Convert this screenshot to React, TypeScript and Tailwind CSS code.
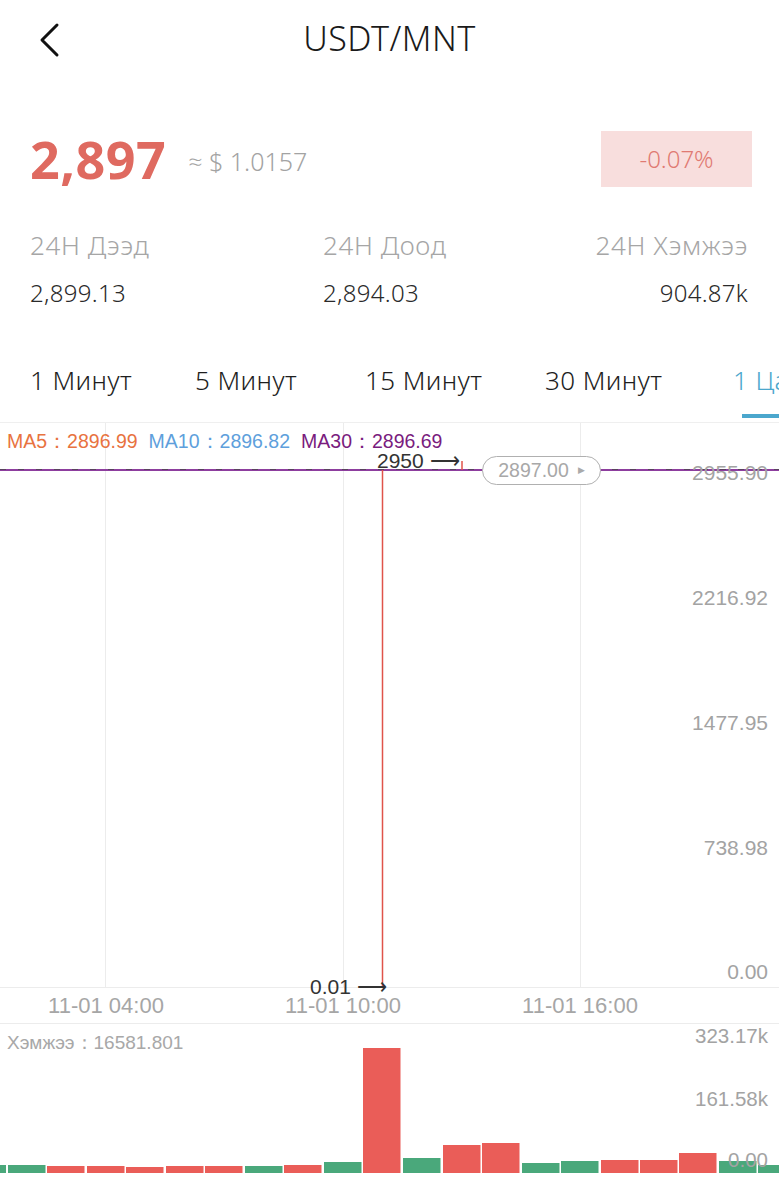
import React from "react";

const bars: { x: number; h: number; c: "r" | "g"; w?: number }[] = [
  { x: 0, h: 8, c: "g", w: 6 },
  { x: 8, h: 8, c: "g" },
  { x: 47, h: 7, c: "r" },
  { x: 87, h: 7, c: "r" },
  { x: 126, h: 6, c: "r" },
  { x: 166, h: 7, c: "r" },
  { x: 205, h: 7, c: "r" },
  { x: 245, h: 7, c: "g" },
  { x: 284, h: 8, c: "r" },
  { x: 324, h: 11, c: "g" },
  { x: 363, h: 125, c: "r" },
  { x: 403, h: 15, c: "g" },
  { x: 443, h: 28, c: "r" },
  { x: 482, h: 30, c: "r" },
  { x: 522, h: 10, c: "g" },
  { x: 561, h: 12, c: "g" },
  { x: 601, h: 13, c: "r" },
  { x: 640, h: 13, c: "r" },
  { x: 679, h: 20, c: "r" },
  { x: 719, h: 12, c: "g" },
  { x: 758, h: 8, c: "g" },
];

const tabs = [
  { label: "1 Минут", w: "w-[165px]" },
  { label: "5 Минут", w: "w-[170px]" },
  { label: "15 Минут", w: "w-[180px]" },
  { label: "30 Минут", w: "w-[188px]" },
];

export default function App() {
  const sans = { fontFamily: '"Noto Sans", "Open Sans", sans-serif' };
  const chartFont = { fontFamily: '"Liberation Sans", Arial, sans-serif' };
  return (
    <div className="w-[779px] h-[1200px] overflow-hidden bg-white flex flex-col" style={sans}>
      {/* Header */}
      <div className="relative h-[76px] flex items-center justify-center shrink-0">
        <svg className="absolute left-[36px] top-[22px]" width="26" height="36" viewBox="0 0 26 36">
          <polyline points="21,3 6,18 21,33" fill="none" stroke="#111" strokeWidth="3" strokeLinecap="round" strokeLinejoin="round" />
        </svg>
        <div className="text-[34px] font-light text-[#1a1a1a] tracking-[0.5px] leading-none">USDT/MNT</div>
      </div>

      {/* Price row */}
      <div className="mt-[55px] h-[56px] flex items-center justify-between pl-[30px] pr-[27px] shrink-0">
        <div className="flex items-center gap-[22px]">
          <span className="text-[52px] font-bold text-[#df6a60] leading-none tracking-[0.5px]">2,897</span>
          <span className="text-[25px] text-[#a3a3a3] font-light leading-none mt-[4px]">≈ $ 1.0157</span>
        </div>
        <div className="w-[151px] h-[56px] bg-[#f8dedd] flex items-center justify-center text-[24px] font-light text-[#e07a72]">
          -0.07%
        </div>
      </div>

      {/* Stats */}
      <div className="mt-[43px] pl-[30px] pr-[31px] grid grid-cols-[293px_1fr_auto] shrink-0">
        <div className="text-[26px] leading-[30px] text-[#a6a6a6] font-light tracking-[0.6px]">24Н Дээд</div>
        <div className="text-[26px] leading-[30px] text-[#a6a6a6] font-light tracking-[0.6px]">24Н Доод</div>
        <div className="text-[26px] leading-[30px] text-[#a6a6a6] font-light tracking-[0.6px] text-right">24Н Хэмжээ</div>
        <div className="mt-[18px] text-[24px] leading-[30px] text-[#2a2a2a] font-light tracking-[0.3px]">2,899.13</div>
        <div className="mt-[18px] text-[24px] leading-[30px] text-[#2a2a2a] font-light tracking-[0.3px]">2,894.03</div>
        <div className="mt-[18px] text-[24px] leading-[30px] text-[#2a2a2a] font-light tracking-[0.3px] text-right">904.87k</div>
      </div>

      {/* Tabs */}
      <div className="mt-[40px] h-[75px] flex pl-[30px] border-b border-[#efefef] shrink-0 whitespace-nowrap">
        {tabs.map((t) => (
          <div key={t.label} className={`${t.w} shrink-0 pt-[16px] text-[26px] leading-[32px] text-[#1e1e1e] font-light tracking-[0.4px]`}>
            {t.label}
          </div>
        ))}
        <div className="shrink-0 pt-[16px] flex flex-col">
          <div className="text-[26px] leading-[32px] text-[#4ba7cd] font-light tracking-[0.4px]">1 Цаг</div>
          <div className="ml-[9px] mt-[18px] h-[4px] w-[60px] bg-[#4ba7cd]" />
        </div>
      </div>

      {/* Main chart */}
      <div className="relative h-[564px] shrink-0" style={chartFont}>
        <svg className="absolute inset-0" width="779" height="564" viewBox="0 0 779 564">
          <line x1="105.5" y1="0" x2="105.5" y2="564" stroke="#ececec" strokeWidth="1" />
          <line x1="343.5" y1="0" x2="343.5" y2="564" stroke="#ececec" strokeWidth="1" />
          <line x1="580.5" y1="0" x2="580.5" y2="564" stroke="#ececec" strokeWidth="1" />
          <line x1="0" y1="47" x2="779" y2="47" stroke="#8d3e9e" strokeWidth="2" />
          <line x1="0" y1="46.5" x2="779" y2="46.5" stroke="#444" strokeWidth="1.2" strokeDasharray="6 12" opacity="0.7" />
          <line x1="382.5" y1="47" x2="382.5" y2="564" stroke="#e0534a" strokeWidth="1.5" />
          <line x1="462" y1="38" x2="462" y2="47" stroke="#e0534a" strokeWidth="1.5" />
        </svg>
        <div className="absolute left-[7px] top-[6px] text-[19.5px] leading-[24px] whitespace-nowrap flex gap-[11px]">
          <span className="text-[#e8733f]">MA5：2896.99</span>
          <span className="text-[#5e9fdc]">MA10：2896.82</span>
          <span className="text-[#7a1c7e]">MA30：2896.69</span>
        </div>
        <div className="absolute left-[377px] top-[26px] text-[21px] leading-[24px] text-[#333] whitespace-nowrap">2950 ⟶</div>
        <div className="absolute left-[482px] top-[33px] w-[119px] h-[29px] rounded-full border-[1.5px] border-[#b0b0b0] bg-white flex items-center justify-center gap-[9px]">
          <span className="text-[19.5px] text-[#a8a8a8]">2897.00</span>
          <span className="text-[9px] text-[#aaa]">▶</span>
        </div>
        <div className="absolute right-[11px] top-[38px] text-[21px] leading-[24px] text-[#a3a3a3]">2955.90</div>
        <div className="absolute right-[11px] top-[163px] text-[21px] leading-[24px] text-[#a3a3a3]">2216.92</div>
        <div className="absolute right-[11px] top-[288px] text-[21px] leading-[24px] text-[#a3a3a3]">1477.95</div>
        <div className="absolute right-[11px] top-[413px] text-[21px] leading-[24px] text-[#a3a3a3]">738.98</div>
        <div className="absolute right-[11px] top-[537px] text-[21px] leading-[24px] text-[#a3a3a3]">0.00</div>
        <div className="absolute left-[310px] top-[552px] text-[21px] leading-[24px] text-[#333] whitespace-nowrap z-10">0.01 ⟶</div>
      </div>

      {/* X axis */}
      <div className="relative h-[37px] border-t border-b border-[#ececec] shrink-0 text-[22px] leading-[26px] text-[#a6a6a6]" style={chartFont}>
        <div className="absolute left-[106px] top-[5px] -translate-x-1/2 whitespace-nowrap">11-01 04:00</div>
        <div className="absolute left-[343px] top-[5px] -translate-x-1/2 whitespace-nowrap">11-01 10:00</div>
        <div className="absolute left-[580px] top-[5px] -translate-x-1/2 whitespace-nowrap">11-01 16:00</div>
      </div>

      {/* Volume */}
      <div className="relative flex-1" style={chartFont}>
        <svg className="absolute inset-0" width="779" height="175" viewBox="0 0 779 175">
          {bars.map((b, i) => (
            <rect
              key={i}
              x={b.x}
              y={149 - b.h}
              width={b.w ?? 37.5}
              height={b.h}
              fill={b.c === "r" ? "#ea5d58" : "#4aa87b"}
            />
          ))}
        </svg>
        <div className="absolute left-[7px] top-[7px] text-[19px] leading-[24px] text-[#a8a8a8]">Хэмжээ：16581.801</div>
        <div className="absolute right-[11px] top-[0px] text-[20.5px] leading-[24px] text-[#a3a3a3]">323.17k</div>
        <div className="absolute right-[11px] top-[63px] text-[20.5px] leading-[24px] text-[#a3a3a3]">161.58k</div>
        <div className="absolute right-[11px] top-[124px] text-[20.5px] leading-[24px] text-[#a3a3a3]">0.00</div>
      </div>
    </div>
  );
}
